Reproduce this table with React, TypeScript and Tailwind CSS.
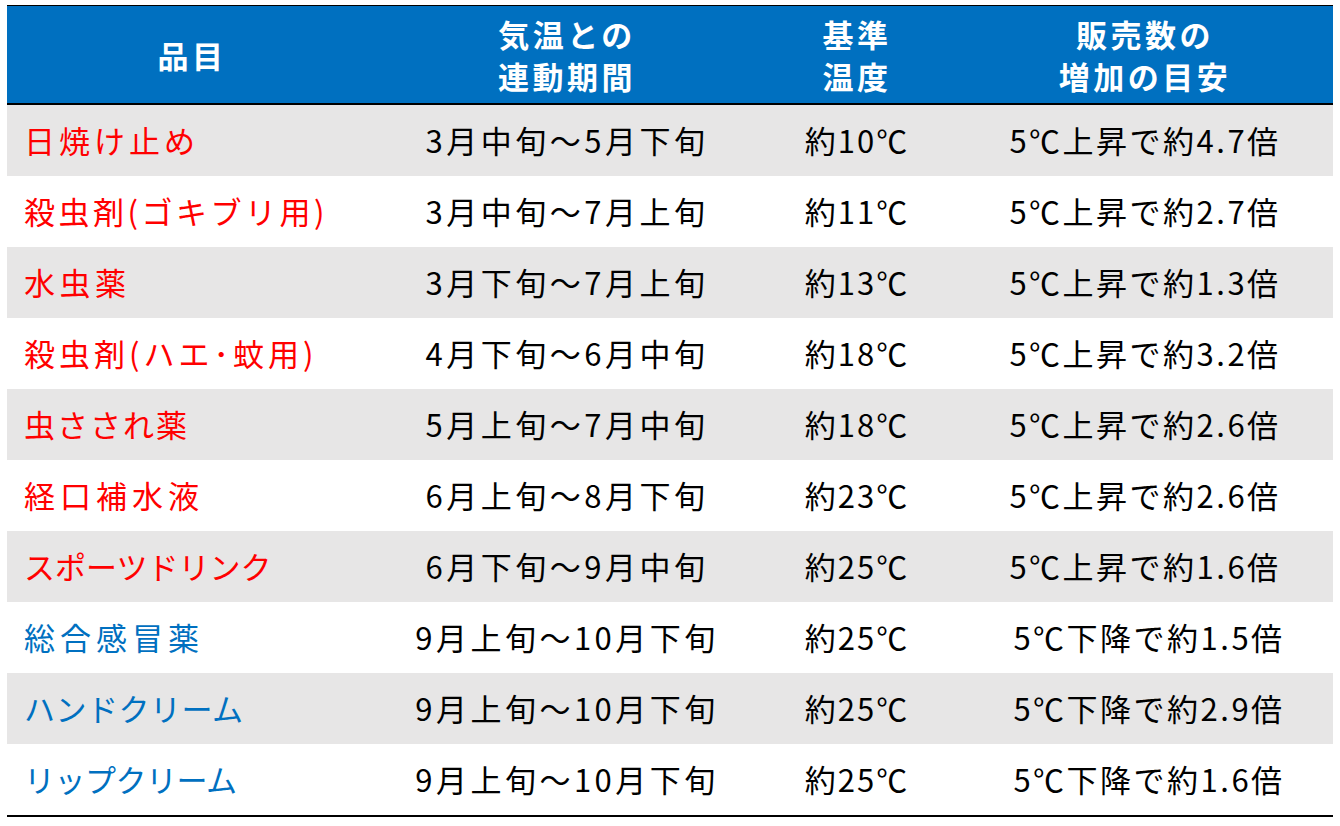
import React from "react";

type Row = {
  name: string;
  track: string;
  color: "red" | "blue";
  period: string;
  temp: string;
  rate: string;
};

const rows: Row[] = [
  { name: "日焼け止め", track: "tracking-[4px]", color: "red", period: "3月中旬～5月下旬", temp: "約10℃", rate: "5℃上昇で約4.7倍" },
  { name: "殺虫剤(ゴキブリ用)", track: "tracking-[3.5px]", color: "red", period: "3月中旬～7月上旬", temp: "約11℃", rate: "5℃上昇で約2.7倍" },
  { name: "水虫薬", track: "tracking-[4.5px]", color: "red", period: "3月下旬～7月上旬", temp: "約13℃", rate: "5℃上昇で約1.3倍" },
  { name: "殺虫剤(ハエ･蚊用)", track: "tracking-[4px]", color: "red", period: "4月下旬～6月中旬", temp: "約18℃", rate: "5℃上昇で約3.2倍" },
  { name: "虫さされ薬", track: "tracking-[2px]", color: "red", period: "5月上旬～7月中旬", temp: "約18℃", rate: "5℃上昇で約2.6倍" },
  { name: "経口補水液", track: "tracking-[5px]", color: "red", period: "6月上旬～8月下旬", temp: "約23℃", rate: "5℃上昇で約2.6倍" },
  { name: "スポーツドリンク", track: "tracking-[0px]", color: "red", period: "6月下旬～9月中旬", temp: "約25℃", rate: "5℃上昇で約1.6倍" },
  { name: "総合感冒薬", track: "tracking-[5px]", color: "blue", period: "9月上旬～10月下旬", temp: "約25℃", rate: "5℃下降で約1.5倍" },
  { name: "ハンドクリーム", track: "tracking-[0.5px]", color: "blue", period: "9月上旬～10月下旬", temp: "約25℃", rate: "5℃下降で約2.9倍" },
  { name: "リップクリーム", track: "tracking-[-0.5px]", color: "blue", period: "9月上旬～10月下旬", temp: "約25℃", rate: "5℃下降で約1.6倍" },
];

export default function App() {
  return (
    <div
      className="w-[1340px] h-[826px] bg-white pt-[5px] pl-[7px]"
      style={{ fontFamily: '"Noto Sans CJK JP", "Noto Sans", sans-serif' }}
    >
      <div className="w-[1326px] border-t border-black">
        <div className="grid grid-cols-[370px_380px_200px_376px] h-[99px] bg-[#0070C0] text-white font-bold text-[31px] leading-[42px] tracking-[3.5px] border-b-2 border-black">
          <div className="flex items-center justify-center">品目</div>
          <div className="flex flex-col items-center justify-center">
            <span>気温との</span>
            <span>連動期間</span>
          </div>
          <div className="flex flex-col items-center justify-center">
            <span>基準</span>
            <span>温度</span>
          </div>
          <div className="flex flex-col items-center justify-center">
            <span>販売数の</span>
            <span>増加の目安</span>
          </div>
        </div>
        {rows.map((r, i) => (
          <div
            key={i}
            className={
              "grid grid-cols-[370px_380px_200px_376px] h-[71px] items-center text-[31px] text-black " +
              (i % 2 === 0 ? "bg-[#E7E6E6]" : "bg-white")
            }
          >
            <div
              className={
                "pl-[17px] whitespace-nowrap " +
                r.track +
                " " +
                (r.color === "red" ? "text-[#FF0000]" : "text-[#0070C0]")
              }
            >
              {r.name}
            </div>
            <div className="text-center tracking-[3.5px] whitespace-nowrap">{r.period}</div>
            <div className="text-center tracking-[2px] whitespace-nowrap">{r.temp}</div>
            <div
              className={
                "text-center tracking-[2.5px] whitespace-nowrap " + (i >= 7 ? "pl-[8px]" : "")
              }
            >
              {r.rate}
            </div>
          </div>
        ))}
        <div className="border-t-2 border-black" />
      </div>
    </div>
  );
}
